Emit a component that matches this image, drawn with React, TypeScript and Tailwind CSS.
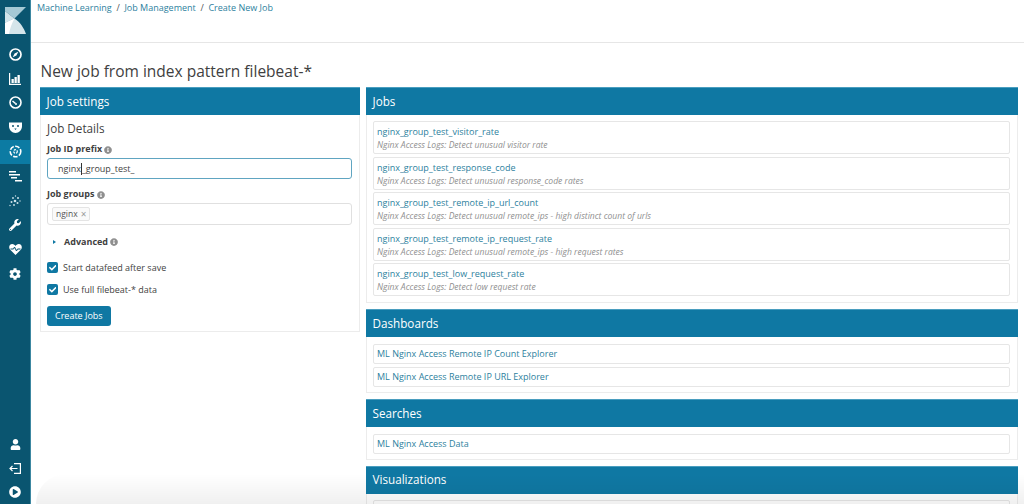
import React from "react";
import { FaUser, FaWrench, FaCog, FaPlayCircle, FaInfoCircle, FaCheck } from "react-icons/fa";

const Info = ({ className = "" }: { className?: string }) => (
  <FaInfoCircle className={`inline-block text-[8px] text-[#8f8f8f] ${className}`} />
);

const Side = ({ children, active = false }: { children: React.ReactNode; active?: boolean }) => (
  <div className={`h-[24.4px] flex items-center justify-center text-white text-[12px] ${active ? "bg-[#0c7ba3]" : ""}`}>
    {children}
  </div>
);

const Panel = ({ title, children, className = "" }: { title: string; children: React.ReactNode; className?: string }) => (
  <section className={`border border-[#ececec] border-t-0 ${className}`}>
    <h2 className="h-[28px] -mx-px flex items-center px-[6.5px] bg-[#0f78a3] border-t border-[#4a9ebf] text-white text-[11.7px] leading-none">{title}</h2>
    {children}
  </section>
);

const LinkRow = ({ name }: { name: string }) => (
  <div className="h-[20px] mb-[2.6px] flex items-center px-[3px] bg-white border border-[#e6e6e6] rounded-[2px] text-[9px] text-[#2d7f9e]">{name}</div>
);

const jobs = [
  ["nginx_group_test_visitor_rate", "Nginx Access Logs: Detect unusual visitor rate"],
  ["nginx_group_test_response_code", "Nginx Access Logs: Detect unusual response_code rates"],
  ["nginx_group_test_remote_ip_url_count", "Nginx Access Logs: Detect unusual remote_ips - high distinct count of urls"],
  ["nginx_group_test_remote_ip_request_rate", "Nginx Access Logs: Detect unusual remote_ips - high request rates"],
  ["nginx_group_test_low_request_rate", "Nginx Access Logs: Detect low request rate"],
];

const Check = ({ label }: { label: string }) => (
  <div className="h-[22.5px] flex items-center gap-[5px] text-[9px] text-[#3f3f3f]">
    <span className="w-[11px] h-[11px] rounded-[2px] bg-[#0f78a3] flex items-center justify-center text-white text-[7.5px]"><FaCheck /></span>
    {label}
  </div>
);

export default function App() {
  return (
    <div className="relative w-[1024px] h-[504px] overflow-hidden flex bg-white font-['Open_Sans',sans-serif] text-[#3f3f3f]">
      <aside className="w-[31px] shrink-0 bg-[#0a5570] border-r border-[#3c87a1] flex flex-col">
        <div className="h-[42px] flex items-start justify-center pt-[7px]">
          <svg width="21" height="27" viewBox="0 0 21 27">
            <path d="M0 0H21L9.500 11.500L0 4Z" fill="#a5c9d5" />
            <path d="M0 4L9.500 11.500L0 16Z" fill="#d2e4ea" />
            <path d="M0 16C3 14 7 12.500 9.500 11.500C15 15 19 21 21 27H0Z" fill="#d5e5ea" />
            <path d="M0 16L9.500 11.500C7 16 5 21 4 27H0Z" fill="#ffffff" />
          </svg>
        </div>
        <Side>
          <svg width="13" height="13" viewBox="0 0 13 13" fill="none"><circle cx="6.500" cy="6.500" r="5.500" stroke="white" strokeWidth="1.700" /><path d="M9.300 3.700L7.400 7.400 3.700 9.300 5.600 5.600Z" fill="white" /></svg>
        </Side>
        <Side>
          <svg width="12" height="12" viewBox="0 0 12 12" fill="white"><path d="M0 0h1.200v10.800H12V12H0zM2.500 6h2.300v4H2.500zM5.500 4h2.300v6H5.500zM8.500 2h2.300v8H8.500z" /></svg>
        </Side>
        <Side>
          <svg width="13" height="13" viewBox="0 0 13 13" fill="none" stroke="white" strokeWidth="1.600"><circle cx="6.500" cy="6.500" r="5.500" /><path d="M3.500 5l3 2.500" /><circle cx="7" cy="8" r="1" fill="white" stroke="none" /></svg>
        </Side>
        <Side>
          <svg width="13" height="11" viewBox="0 0 13 11" fill="white"><path d="M0 .5h13V4c0 4-3 7-6.500 7S0 8 0 4z" /><circle cx="4" cy="4" r="1" fill="#0a5570" /><circle cx="9" cy="4" r="1" fill="#0a5570" /><path d="M5.300 6.500h2.400L6.500 8z" fill="#0a5570" /></svg>
        </Side>
        <Side active>
          <svg width="13" height="13" viewBox="0 0 13 13" fill="none" stroke="white" strokeWidth="1.600"><circle cx="6.500" cy="6.500" r="5.300" strokeDasharray="4.500 1.500" /><circle cx="6.500" cy="6.500" r="1.800" strokeWidth="1.200" strokeDasharray="2 1" /></svg>
        </Side>
        <Side>
          <svg width="13" height="11" viewBox="0 0 13 11" fill="white"><path d="M0 0h7v1.600H0zM0 3h11v1.600H0zM2 6h6v1.600H2zM6 9h7v1.600H6z" /></svg>
        </Side>
        <Side>
          <svg width="12" height="12" viewBox="0 0 12 12" fill="#cfe3ea"><circle cx="6" cy="6" r="1.300" /><circle cx="2.500" cy="7" r="1" /><circle cx="9" cy="3" r="1" /><circle cx="4" cy="3" r=".9" /><circle cx="8.500" cy="8" r="1" /><circle cx="5" cy="10" r=".9" /><circle cx="11" cy="6" r=".7" /><circle cx="1" cy="10.500" r=".7" /><circle cx="6.500" cy="1" r=".7" /></svg>
        </Side>
        <Side><FaWrench /></Side>
        <Side>
          <svg width="13" height="12" viewBox="0 0 13 12" fill="white"><path d="M6.500 12L1 6.500C-.5 5 0 1 3.300 1c1.500 0 2.600 1 3.200 2C7.100 2 8.200 1 9.700 1 13 1 13.500 5 12 6.500z" /><path d="M1.500 6h3l1-2 2 4 1-2h3" fill="none" stroke="#0a5570" strokeWidth="1" /></svg>
        </Side>
        <Side><FaCog /></Side>
        <div className="flex-1" />
        <div className="h-[24px] flex items-center justify-center text-white text-[11px]"><FaUser /></div>
        <div className="h-[24px] flex items-center justify-center">
          <svg width="12" height="11" viewBox="0 0 12 11" fill="none" stroke="white" strokeWidth="1.200"><path d="M5 .6h6.400v9.800H5M8.500 5.500H1M3.500 3L1 5.500 3.500 8" /></svg>
        </div>
        <div className="h-[24px] pb-[1px] flex items-center justify-center text-white text-[12px]"><FaPlayCircle /></div>
      </aside>

      <main className="flex-1 min-w-0">
        <nav className="h-[43px] border-b border-[#e6e6e6] pl-[6px] pt-[1px] text-[9px] leading-[14px] text-[#2d7f9e] whitespace-pre">
          Machine Learning<span className="text-[#555]">  /  </span>Job Management<span className="text-[#555]">  /  </span>Create New Job
        </nav>
        <div className="pl-[9px] pr-[6px]">
          <h1 className="h-[44px] pt-[16px] pl-[0.5px] text-[15.5px] leading-[24px] text-[#3f3f3f]">New job from index pattern filebeat-*</h1>
          <div className="flex gap-[6px] items-start">
            <div className="w-[320px] shrink-0">
              <Panel title="Job settings" className="h-[245px]">
                <div className="px-[6px] pt-[5px]">
                  <div className="text-[11.7px] leading-[16px] mb-[6px]">Job Details</div>
                  <label className="block text-[9px] font-bold leading-[13px] mb-[3px]">Job ID prefix <Info /></label>
                  <div className="h-[21px] w-[305px] border border-[#60a5c1] rounded-[3px] flex items-center pl-[10px] text-[9px]">nginx<span className="w-px h-[12px] bg-[#333]" />_group_test_</div>
                  <label className="block mt-[8px] text-[9px] font-bold leading-[13px] mb-[3px]">Job groups <Info /></label>
                  <div className="h-[22px] w-[305px] border border-[#e0e0e0] rounded-[3px] flex items-center pl-[4px]">
                    <span className="h-[14px] px-[3px] flex items-center gap-[3px] border border-[#e4e4e4] rounded-[2px] bg-[#fafafa] text-[8.5px] text-[#555]">nginx <span className="text-[#999] text-[10px] leading-none">×</span></span>
                  </div>
                  <div className="mt-[3px] h-[28px] flex items-center pl-[6px] text-[9px] font-bold">
                    <span className="w-0 h-0 border-y-[2.5px] border-y-transparent border-l-[3px] border-l-[#0f78a3] mr-[8px]" />Advanced&nbsp;<Info />
                  </div>
                  <Check label="Start datafeed after save" />
                  <Check label="Use full filebeat-* data" />
                  <button className="mt-[5px] h-[20px] px-[8px] bg-[#0f78a3] rounded-[3px] text-white text-[9px]">Create Jobs</button>
                </div>
              </Panel>
            </div>
            <div className="flex-1 min-w-0 flex flex-col gap-[6px]">
              <Panel title="Jobs">
                <div className="pl-[6px] pr-[7px] pt-[6px] pb-[3px]">
                  {jobs.map(([n, d]) => (
                    <div key={n} className="h-[33px] mb-[2.6px] px-[3px] pt-[3px] border border-[#e6e6e6] rounded-[2px]">
                      <div className="text-[9px] leading-[14px] text-[#2d7f9e]">{n}</div>
                      <div className="text-[8.55px] leading-[12px] italic text-[#8f8f8f]">{d}</div>
                    </div>
                  ))}
                </div>
              </Panel>
              <Panel title="Dashboards">
                <div className="pl-[6px] pr-[7px] pt-[7px] pb-[3px]">
                  <LinkRow name="ML Nginx Access Remote IP Count Explorer" />
                  <LinkRow name="ML Nginx Access Remote IP URL Explorer" />
                </div>
              </Panel>
              <Panel title="Searches">
                <div className="pl-[6px] pr-[7px] pt-[7px] pb-[2px]">
                  <LinkRow name="ML Nginx Access Data" />
                </div>
              </Panel>
              <Panel title="Visualizations">
                <div className="pl-[6px] pr-[7px] pt-[6px] pb-[3px]">
                  <LinkRow name="" />
                </div>
              </Panel>
            </div>
          </div>
        </div>
      </main>
      <div className="absolute left-[36px] right-0 bottom-0 h-[30px] bg-gradient-to-b from-transparent to-[#0000000f] pointer-events-none rounded-tl-[40px]" />
    </div>
  );
}
